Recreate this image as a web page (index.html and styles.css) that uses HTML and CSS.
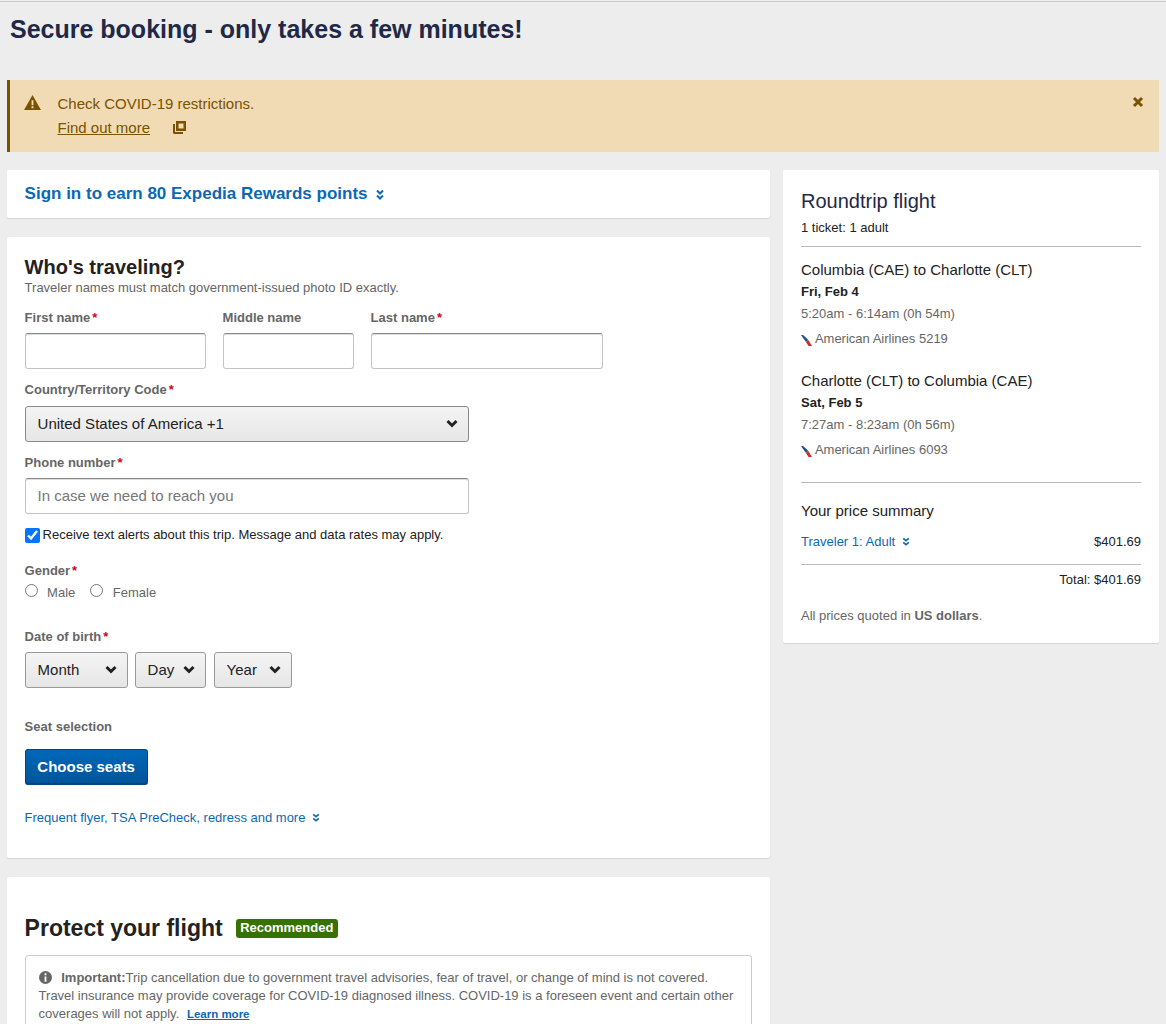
FILE: index.html
```html
<!DOCTYPE html>
<html>
  <head>
    <title>Secure booking</title>
    <link rel="stylesheet" href="styles.css">
  </head>
  <body>
    <div class="page">
      <h1 class="page-title">Secure booking - only takes a few minutes!</h1>

      <div class="alert">
        <svg class="alert-icon" viewBox="0 0 18 16"><path fill-rule="evenodd" d="M9 0 18 16H0ZM8 5.500V11h2V5.500ZM8 12v2h2v-2Z"/></svg>
        <div class="alert-text">
          <div>Check COVID-19 restrictions.</div>
          <div class="alert-link">
            <a href="#">Find out more</a>
            <svg class="open-icon" viewBox="0 0 13 13"><path fill-rule="evenodd" d="M3 0h10v10H3ZM5.500 2.500v5h5v-5Z"/><path d="M0 3h2v8h8v2H1.500Q0 13 0 11.500Z"/></svg>
          </div>
        </div>
        <svg class="alert-close" viewBox="0 0 12 12"><path d="M2 2l8 8M10 2l-8 8"/></svg>
      </div>

      <div class="columns">
        <div class="main">
          <div class="card signin">
            <a href="#">Sign in to earn 80 Expedia Rewards points</a>
            <svg class="chevrons chevrons-lg" viewBox="0 0 8 11"><path d="M1 1.500 4 4.500l3-3M1 6.500 4 9.500l3-3"/></svg>
          </div>

          <div class="card traveler">
            <h2>Who's traveling?</h2>
            <p class="hint">Traveler names must match government-issued photo ID exactly.</p>

            <div class="name-row">
              <div class="field first"><label>First name<span class="req">*</span></label><input type="text"></div>
              <div class="field middle"><label>Middle name</label><input type="text"></div>
              <div class="field last"><label>Last name<span class="req">*</span></label><input type="text"></div>
            </div>

            <div class="field wide country">
              <label>Country/Territory Code<span class="req">*</span></label>
              <div class="select-wrap">
                <select><option>United States of America +1</option></select>
                <svg class="select-arrow" viewBox="0 0 12 9"><path d="M1.500 2 6 6.500 10.500 2"/></svg>
              </div>
            </div>

            <div class="field wide">
              <label>Phone number<span class="req">*</span></label>
              <input type="text" placeholder="In case we need to reach you">
            </div>

            <label class="check-row"><input type="checkbox" checked>Receive text alerts about this trip. Message and data rates may apply.</label>

            <div class="gender">
              <label>Gender<span class="req">*</span></label>
              <div class="radios">
                <span class="radio"><input type="radio" name="gender">Male</span>
                <span class="radio"><input type="radio" name="gender">Female</span>
              </div>
            </div>

            <div class="dob">
              <label>Date of birth<span class="req">*</span></label>
              <div class="dob-row">
                <div class="select-wrap month">
                  <select><option>Month</option></select>
                  <svg class="select-arrow" viewBox="0 0 12 9"><path d="M1.500 2 6 6.500 10.500 2"/></svg>
                </div>
                <div class="select-wrap day">
                  <select><option>Day</option></select>
                  <svg class="select-arrow" viewBox="0 0 12 9"><path d="M1.500 2 6 6.500 10.500 2"/></svg>
                </div>
                <div class="select-wrap year">
                  <select><option>Year</option></select>
                  <svg class="select-arrow" viewBox="0 0 12 9"><path d="M1.500 2 6 6.500 10.500 2"/></svg>
                </div>
              </div>
            </div>

            <div class="seats">
              <label>Seat selection</label>
              <button>Choose seats</button>
            </div>

            <div class="more">
              <a href="#">Frequent flyer, TSA PreCheck, redress and more</a>
              <svg class="chevrons" viewBox="0 0 10 11"><path d="M1.500 1.500 5 4.500l3.500-3M1.500 6.500 5 9.500l3.500-3"/></svg>
            </div>
          </div>

          <div class="card protect">
            <div class="protect-head">
              <h2>Protect your flight</h2>
              <span class="badge">Recommended</span>
            </div>
            <div class="notice">
              <svg class="info-icon" viewBox="0 0 14 14"><path fill-rule="evenodd" d="M7 0a7 7 0 1 0 0 14A7 7 0 0 0 7 0ZM6 2.500h2v2H6ZM6 6h2v5.500H6Z"/></svg>
              <b>Important:</b>Trip cancellation due to government travel advisories, fear of travel, or change of mind is not covered. Travel insurance may provide coverage for COVID-19 diagnosed illness. COVID-19 is a foreseen event and certain other coverages will not apply.
              <a href="#">Learn more</a>
            </div>
          </div>
        </div>

        <div class="card summary">
          <h3>Roundtrip flight</h3>
          <p class="tickets">1 ticket: 1 adult</p>

          <div class="legs">
            <div class="leg">
              <div class="route">Columbia (CAE) to Charlotte (CLT)</div>
              <div class="date">Fri, Feb 4</div>
              <div class="times">5:20am - 6:14am (0h 54m)</div>
              <div class="airline">
                <svg class="aa-logo" viewBox="0 0 11 12"><path class="aa-blue" d="M0 1h2L7 5.500 5 8Z"/><path class="aa-red" d="M5 8 7 5.500 11 12H7.500Z"/></svg>
                American Airlines 5219
              </div>
            </div>
            <div class="leg">
              <div class="route">Charlotte (CLT) to Columbia (CAE)</div>
              <div class="date">Sat, Feb 5</div>
              <div class="times">7:27am - 8:23am (0h 56m)</div>
              <div class="airline">
                <svg class="aa-logo" viewBox="0 0 11 12"><path class="aa-blue" d="M0 1h2L7 5.500 5 8Z"/><path class="aa-red" d="M5 8 7 5.500 11 12H7.500Z"/></svg>
                American Airlines 6093
              </div>
            </div>
          </div>

          <div class="price">
            <div class="price-title">Your price summary</div>
            <div class="price-row">
              <span><a href="#">Traveler 1: Adult</a><svg class="chevrons chevrons-row" viewBox="0 0 10 11"><path d="M1.500 1.500 5 4.500l3.500-3M1.500 6.500 5 9.500l3.500-3"/></svg></span>
              <span>$401.69</span>
            </div>
            <div class="price-total">Total: $401.69</div>
            <p class="currency">All prices quoted in <b>US dollars</b>.</p>
          </div>
        </div>
      </div>
    </div>
  </body>
</html>
```

FILE: styles.css
```css
html, body {
  margin: 0;
  padding: 0;
}
body {
  background-color: #ededed;
  font-family: "Liberation Sans", Arial, sans-serif;
  font-size: 13px;
  color: #222;
}
a {
  color: #0b68b5;
  text-decoration: none;
}
.page {
  height: 1022px;
  margin-top: 1px;
  overflow: hidden;
  padding: 0 7px;
  border-top: 1px solid #ccc;
}
.page-title {
  margin: 0;
  padding: 13px 3px 0;
  font-size: 25px;
  line-height: 29px;
  font-weight: bold;
  color: #1f2847;
}

/* covid banner */
.alert {
  display: flex;
  margin-top: 36px;
  height: 72px;
  box-sizing: border-box;
  padding: 12px 15px 0 14px;
  background-color: #f0dbb5;
  border-left: 3px solid #7b5200;
  color: #7b5200;
  font-size: 15px;
  line-height: 24px;
}
.alert-icon {
  width: 17px;
  height: 15px;
  margin-top: 3px;
  fill: #7b5200;
}
.alert-text {
  flex: 1;
  margin-left: 16.500px;
}
.alert-link a {
  color: #7b5200;
  text-decoration: underline;
}
.open-icon {
  width: 13px;
  height: 13px;
  margin-left: 19px;
  vertical-align: -1px;
  fill: #7b5200;
}
.alert-close {
  width: 12px;
  height: 12px;
  margin-top: 4px;
  fill: none;
  stroke: #7b5200;
  stroke-width: 3;
}

.columns {
  display: flex;
  align-items: flex-start;
  gap: 13px;
  margin-top: 18px;
}
.main {
  width: 763px;
  flex: none;
}
.card {
  background-color: #fff;
  box-shadow: 0 1px 1px rgba(0, 0, 0, 0.1);
  border-radius: 2px;
}
.chevrons {
  width: 8px;
  height: 9px;
  margin-left: 3px;
  fill: none;
  stroke: #0b68b5;
  stroke-width: 2;
}
.chevrons-lg {
  width: 8px;
  height: 11px;
  margin-left: 4px;
  vertical-align: -1px;
}
.chevrons-row {
  margin-left: 7px;
}

.signin {
  height: 48px;
  box-sizing: border-box;
  padding: 14px 18px 0 17.600px;
  font-size: 17px;
  line-height: 20px;
  font-weight: bold;
}

/* traveler form */
.traveler {
  margin-top: 19px;
  height: 621px;
  box-sizing: border-box;
  padding: 18px 18px 0 17.600px;
}
.traveler h2 {
  margin: 0;
  font-size: 20px;
  line-height: 24px;
  font-weight: bold;
  color: #222;
}
.hint {
  margin: 1px 0 0;
  color: #666;
  line-height: 16px;
}
label {
  display: block;
  font-weight: bold;
  color: #666;
  line-height: 16px;
}
.req {
  color: #d0021b;
  margin-left: 2px;
}
.name-row {
  display: flex;
  gap: 17px;
  margin-top: 14px;
}
.field label {
  margin-bottom: 7px;
}
.country label {
  margin-bottom: 8px;
}
.field input, select {
  display: block;
  width: 100%;
  height: 36px;
  box-sizing: border-box;
  border: 1px solid #c4c4c4;
  border-top-color: #8a8a8a;
  box-shadow: inset 0 1px 0 #ddd;
  border-radius: 3px;
  padding: 0 12px 2px;
  font-family: inherit;
  font-size: 15px;
}
.field input::placeholder {
  color: #777;
}
.first {
  width: 181px;
}
.middle {
  width: 131px;
}
.last {
  width: 232px;
}
.wide {
  width: 444px;
  margin-top: 13px;
}
.select-wrap {
  position: relative;
}
select {
  appearance: none;
  border: 1px solid #8a8a8a;
  box-shadow: none;
  background: linear-gradient(#f4f4f4, #e6e6e6);
  color: #222;
}
.select-arrow {
  position: absolute;
  right: 11px;
  top: 13px;
  width: 12px;
  height: 9px;
  fill: none;
  stroke: #222;
  stroke-width: 3;
  pointer-events: none;
}
.check-row {
  display: flex;
  align-items: center;
  margin-top: 13px;
  height: 16px;
  font-weight: normal;
  color: #222;
}
.check-row input {
  width: 15px;
  height: 15px;
  margin: 0 3px 0 0;
}
.gender {
  margin-top: 20px;
}
.radios {
  display: flex;
  gap: 15px;
  margin-top: 5px;
}
.radio {
  color: #666;
  line-height: 16px;
}
.radio input {
  margin: 0 9.500px 0 0;
  vertical-align: 0;
}
.dob {
  margin-top: 28px;
}
.dob-row {
  display: flex;
  gap: 7px;
  margin-top: 7px;
}
.month {
  width: 103px;
}
.day {
  width: 71px;
}
.year {
  width: 78px;
  margin-left: 1px;
}
.day select {
  padding-right: 0;
}
.dob-row select {
  border-color: #999;
}
.seats {
  margin-top: 31px;
}
.seats button {
  display: block;
  margin-top: 14px;
  height: 36px;
  width: 123px;
  padding: 0;
  border: 1px solid #00477f;
  border-bottom-width: 2px;
  border-radius: 3px;
  background: linear-gradient(#0068b8, #00559b);
  color: #fff;
  font-family: inherit;
  font-size: 15px;
  font-weight: bold;
}
.more {
  margin-top: 25px;
  line-height: 16px;
}

/* insurance */
.protect {
  margin-top: 19px;
  padding: 37px 18px 18px 17.600px;
}
.protect-head {
  display: flex;
  align-items: center;
  gap: 13px;
}
.protect-head h2 {
  margin: 0;
  font-size: 23px;
  line-height: 28px;
  color: #222;
}
.badge {
  padding: 0 4.500px;
  height: 19px;
  line-height: 18px;
  background-color: #367200;
  border-radius: 3px;
  color: #fff;
  font-weight: bold;
}
.notice {
  margin-top: 13px;
  padding: 13px 12px 12px 13px;
  border: 1px solid #ccc;
  border-radius: 3px;
  color: #666;
  line-height: 18px;
}
.notice b {
  margin-left: 6px;
}
.notice a {
  margin-left: 4px;
  font-size: 11.500px;
  font-weight: bold;
  text-decoration: underline;
}
.info-icon {
  width: 13px;
  height: 13px;
  fill: #666;
  vertical-align: -2px;
}

/* sidebar */
.summary {
  width: 376px;
  flex: none;
  height: 473px;
  box-sizing: border-box;
  padding: 18px 18px 0;
}
.summary h3 {
  margin: 0;
  font-size: 20px;
  line-height: 26px;
  font-weight: normal;
  color: #1f2847;
}
.tickets {
  margin: 0;
  padding: 6px 0 10px;
  line-height: 16px;
  border-bottom: 1px solid #bbb;
}
.legs {
  border-bottom: 1px solid #bbb;
  padding-top: 13px;
  padding-bottom: 24px;
}
.leg + .leg {
  margin-top: 24px;
}
.route {
  font-size: 15px;
  line-height: 20px;
}
.date {
  font-weight: bold;
  line-height: 16px;
  margin-top: 4px;
}
.times {
  color: #666;
  line-height: 16px;
  margin-top: 6px;
}
.airline {
  color: #666;
  line-height: 16px;
  margin-top: 9px;
}
.aa-logo {
  width: 11px;
  height: 12px;
  vertical-align: -3px;
}
.aa-blue {
  fill: #1f4e8c;
}
.aa-red {
  fill: #c8312b;
}
.price-title {
  margin-top: 18px;
  font-size: 15px;
  line-height: 20px;
}
.price-row {
  display: flex;
  justify-content: space-between;
  margin-top: 13px;
  padding-bottom: 14px;
  line-height: 16px;
  border-bottom: 1px solid #bbb;
}
.price-total {
  margin-top: 7px;
  text-align: right;
  line-height: 16px;
}
.currency {
  margin: 20px 0 0;
  color: #666;
  line-height: 16px;
}
```
